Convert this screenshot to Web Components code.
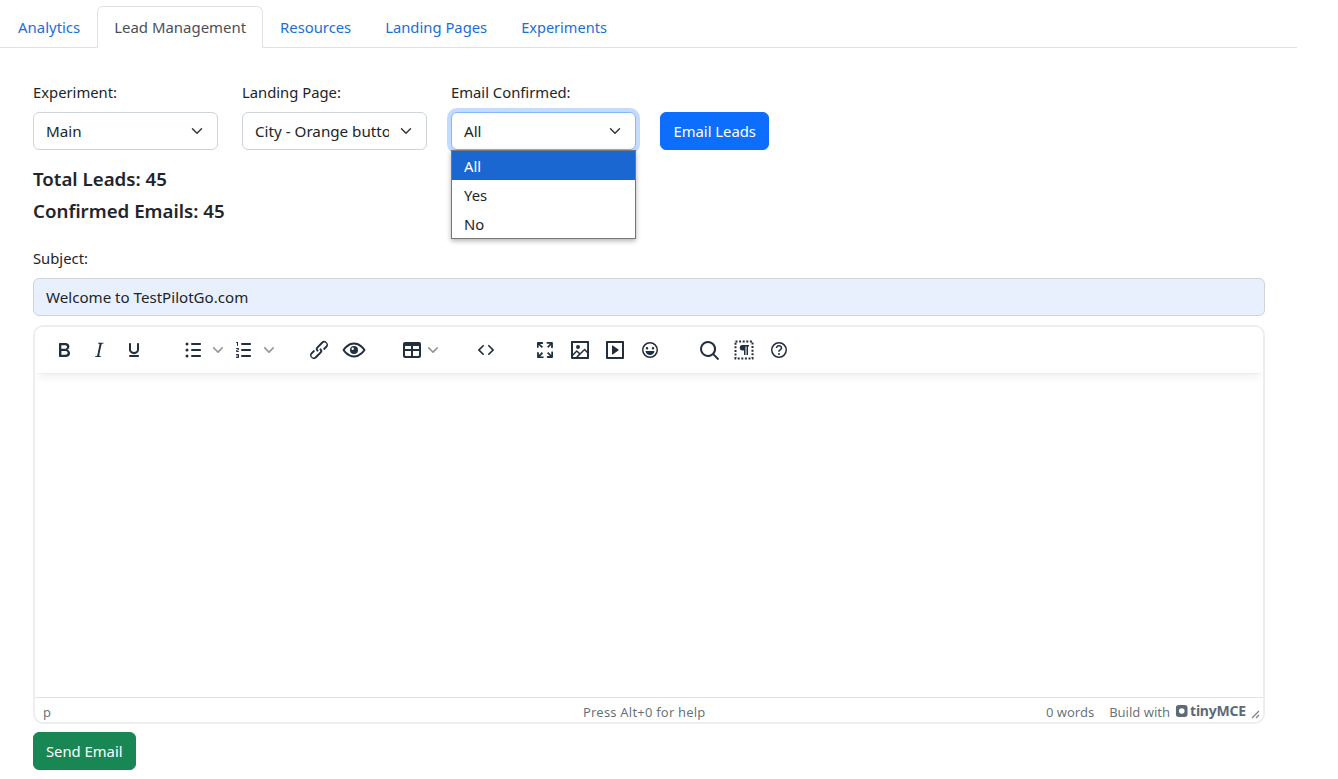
<!DOCTYPE html>
<html><head><meta charset="utf-8"><style>
html,body{margin:0;padding:0;background:#fff}
body{font-family:"Noto Sans","Open Sans",sans-serif;font-size:14.8px;color:#212529;overflow:hidden;height:779px}
</style></head><body>
<lead-page></lead-page>
<script>
const ICONS={
bold:'<path d="M7.8 19c-.3 0-.5 0-.6-.2l-.2-.5V5.700c0-.2 0-.4.2-.5l.6-.2h5c1.500 0 2.700.3 3.500 1 .7.6 1.100 1.400 1.100 2.500a3 3 0 0 1-.6 1.900c-.4.6-1 1-1.600 1.200.4.1.9.3 1.300.6s.8.7 1 1.200c.4.4.5 1 .5 1.600 0 1.300-.4 2.300-1.300 3-.8.7-2.100 1-3.800 1H7.800Zm5-8.300c.6 0 1.200-.1 1.600-.5.4-.3.6-.7.6-1.300 0-1.100-.8-1.700-2.400-1.700H9.300v3.500h3.400Zm.5 6c.7 0 1.300-.1 1.700-.4.4-.4.6-.9.6-1.500s-.2-1-.7-1.400c-.4-.3-1-.4-2-.4H9.400v3.800h4Z"/>',
italic:'<path d="m16.7 4.7-.1.9h-.3c-.6 0-1 0-1.400.3-.3.3-.4.6-.5 1.100l-2.100 9.800v.6c0 .5.4.8 1.400.8h.2l-.2.8H8l.2-.8h.2c1.100 0 1.800-.5 2-1.500l2-9.800.1-.5c0-.6-.4-.8-1.400-.8h-.3l.2-.9h5.800Z"/>',
underline:'<path d="M16 5c.6 0 1 .4 1 1v5.500a4 4 0 0 1-.4 1.800l-1 1.400a5.300 5.300 0 0 1-5.500 1 5 5 0 0 1-1.600-1c-.5-.4-.8-.9-1.100-1.400a4 4 0 0 1-.4-1.800V6c0-.6.4-1 1-1s1 .4 1 1v5.500c0 .3 0 .6.2 1l.6.7a3.300 3.300 0 0 0 2.200.8 3.400 3.400 0 0 0 2.200-.8c.3-.2.4-.5.6-.8l.2-.9V6c0-.6.4-1 1-1ZM8 17h8c.6 0 1 .4 1 1s-.4 1-1 1H8a1 1 0 0 1 0-2Z"/>',
ul:'<path d="M11 5h8c.6 0 1 .4 1 1s-.4 1-1 1h-8a1 1 0 0 1 0-2Zm0 6h8c.6 0 1 .4 1 1s-.4 1-1 1h-8a1 1 0 0 1 0-2Zm0 6h8c.6 0 1 .4 1 1s-.4 1-1 1h-8a1 1 0 0 1 0-2Z"/><circle cx="6" cy="6" r="1.500"/><circle cx="6" cy="12" r="1.500"/><circle cx="6" cy="18" r="1.500"/>',
ol:'<path d="M10 17h8c.6 0 1 .4 1 1s-.4 1-1 1h-8a1 1 0 0 1 0-2Zm0-6h8c.6 0 1 .4 1 1s-.4 1-1 1h-8a1 1 0 0 1 0-2Zm0-6h8c.6 0 1 .4 1 1s-.4 1-1 1h-8a1 1 0 1 1 0-2ZM6 4v3.500c0 .3-.2.5-.5.5a.5.5 0 0 1-.5-.5V5h-.5a.5.5 0 0 1 0-1H6Zm-1 8.800.2.2h1.300c.3 0 .5.2.5.5s-.2.5-.5.5H4.900a1 1 0 0 1-.9-1V13c0-.4.3-.8.6-1l1.200-.4.2-.3a.2.2 0 0 0-.2-.2H4.500a.5.5 0 0 1-.5-.5c0-.3.2-.5.5-.5h1.600c.5 0 .9.4.9 1v.1c0 .4-.3.8-.6 1l-1.200.4-.2.3ZM7 17v2c0 .6-.4 1-1 1H4.500a.5.5 0 0 1 0-1h1.200c.2 0 .3-.1.3-.3 0-.2-.1-.3-.3-.3H4.400a.4.4 0 1 1 0-.8h1.300c.2 0 .3-.1.3-.3 0-.2-.1-.3-.3-.3H4.500a.5.5 0 1 1 0-1H6c.6 0 1 .4 1 1Z"/>',
link:'<path d="M6.200 12.300a1 1 0 0 1 1.400 1.400l-2 2a2 2 0 1 0 2.600 2.800l4.800-4.800a1 1 0 0 0 0-1.400 1 1 0 1 1 1.400-1.300 2.900 2.900 0 0 1 0 4L9.600 20a3.900 3.900 0 0 1-5.500-5.500l2-2Zm11.600-.6a1 1 0 0 1-1.400-1.400l2-2a2 2 0 1 0-2.600-2.800L11 10.300a1 1 0 0 0 0 1.400A1 1 0 1 1 9.600 13a2.900 2.900 0 0 1 0-4L14.400 4a3.900 3.900 0 0 1 5.500 5.500l-2 2Z"/>',
eye:'<path fill="none" stroke="#222f3e" stroke-width="2" d="M1.600 12S5.500 5.600 12 5.600 22.400 12 22.400 12 18.500 18.400 12 18.400 1.600 12 1.600 12Z"/><circle cx="12" cy="12" r="4"/><circle cx="10.700" cy="10.700" r="1.200" fill="#fff"/>',
table:'<path fill-rule="evenodd" d="M19 4a2 2 0 0 1 2 2v12a2 2 0 0 1-2 2H5a2 2 0 0 1-2-2V6c0-1.100.9-2 2-2h14Zm-8 9H5v4.300c0 .4.3.7.7.7H11v-5Zm8 0h-6v5h5.300c.4 0 .7-.3.7-.7V13Zm-8-5H5v3h6V8Zm8 0h-6v3h6V8Z"/>',
code:'<path d="M9.800 15.700c.3.3.3.8 0 1-.3.4-.9.4-1.200 0l-4.400-4.100a.8.8 0 0 1 0-1.200l4.400-4.200c.3-.3.9-.3 1.200 0 .3.3.3.8 0 1.100L6 12l3.800 3.700ZM14.200 15.700c-.3.3-.3.8 0 1 .4.4.9.4 1.200 0l4.400-4.100c.3-.3.3-.9 0-1.200l-4.400-4.200a.8.8 0 0 0-1.200 0c-.3.3-.3.8 0 1.100L18 12l-3.800 3.700Z"/>',
full:'<path d="m15.300 10-1.200-1.300 2.900-3h-2.300a.9.9 0 1 1 0-1.700H19c.5 0 .9.4.9.9v4.400a.9.9 0 1 1-1.800 0V7l-2.900 3Zm0 4 3 3v-2.300a.9.9 0 1 1 1.700 0V19c0 .5-.4.9-.9.9h-4.400a.9.9 0 1 1 0-1.800H17l-3-2.900 1.300-1.200ZM10 15.400l-2.900 3h2.300a.9.9 0 1 1 0 1.700H5a.9.9 0 0 1-.9-.9v-4.400a.9.9 0 1 1 1.800 0V17l2.900-3 1.200 1.300ZM8.700 10 5.700 7v2.300a.9.9 0 0 1-1.700 0V5c0-.5.4-.9.9-.9h4.400a.9.9 0 0 1 0 1.800H7l3 2.900-1.300 1.200Z"/>',
image:'<path fill-rule="evenodd" d="M4 3h16c.6 0 1 .4 1 1v16c0 .6-.4 1-1 1H4a1 1 0 0 1-1-1V4c0-.6.4-1 1-1Zm1 12.700 3.300-3.200c.3-.3.7-.3 1 0L12 15l4.100-4c.3-.4.8-.4 1 0l2 1.900V5H5v10.700ZM5 18v1h3l2.800-2.900-2-2L5 18Zm14-3-2.500-2.400-6.400 6.400H19v-4Zm-9-4a2 2 0 1 0 0-4 2 2 0 0 0 0 4Z"/>',
embed:'<path fill-rule="evenodd" d="M4 3h16c.6 0 1 .4 1 1v16c0 .6-.4 1-1 1H4a1 1 0 0 1-1-1V4c0-.6.4-1 1-1Zm1 2v14h14V5H5Zm4.800 2.600 5.600 4a.5.5 0 0 1 0 .8l-5.600 4A.5.5 0 0 1 9 16V8a.5.5 0 0 1 .8-.4Z"/>',
emoji:'<path fill-rule="evenodd" d="M12 4a8 8 0 1 1 0 16 8 8 0 0 1 0-16Zm0 1.500a6.500 6.500 0 1 0 0 13 6.500 6.500 0 0 0 0-13ZM9 9a1.200 1.200 0 1 1 0 2.500A1.200 1.200 0 0 1 9 9Zm6 0a1.200 1.200 0 1 1 0 2.500A1.200 1.200 0 0 1 15 9Zm-7.500 4h9c-.3 2.400-2.200 4-4.500 4s-4.200-1.600-4.500-4Z"/>',
search:'<path fill-rule="evenodd" d="M16 17.300a8 8 0 1 1 1.400-1.400l4.300 4.400a1 1 0 0 1-1.400 1.400l-4.300-4.400ZM11 17a6 6 0 1 0 0-12 6 6 0 0 0 0 12Z"/>',
blocks:'<rect x="3.500" y="3.500" width="17" height="17" fill="none" stroke="#222f3e" stroke-width="2" stroke-dasharray="2 1.600"/><path d="M10.500 7H17v1.500h-1V17h-1.500V8.500h-1V17H12v-4.500h-1.500a2.750 2.750 0 0 1 0-5.500Z"/>',
help:'<path fill-rule="evenodd" d="M12 4a8 8 0 1 1 0 16 8 8 0 0 1 0-16Zm0 1.500a6.500 6.500 0 1 0 0 13 6.500 6.500 0 0 0 0-13ZM12 15a1 1 0 1 1 0 2 1 1 0 0 1 0-2Zm0-8c1.800 0 3.200 1.200 3.200 2.900 0 1.300-.8 2-1.600 2.500-.6.4-.9.7-.9 1.100v.2h-1.500v-.3c0-1 .6-1.600 1.500-2.200.6-.4 1-.7 1-1.300 0-.8-.7-1.400-1.700-1.400s-1.700.6-1.800 1.500H8.800C9 8.200 10.200 7 12 7Z"/>'
};
const CHEV='<svg width="10" height="10" viewBox="0 0 10 10" style="fill:#222f3e;opacity:.5"><path d="M8.700 2.200c.3-.3.8-.3 1 0 .4.4.4.9 0 1.200L5.700 7.800c-.3.3-.9.3-1.200 0L.2 3.400a.8.8 0 0 1 0-1.200c.3-.3.8-.3 1.100 0L5 6l3.700-3.800Z"/></svg>';
function def(name,css,html){
  customElements.define(name,class extends HTMLElement{
    connectedCallback(){ if(this.shadowRoot) return; const r=this.attachShadow({mode:'open'});
      r.innerHTML='<style>'+css+'</style>'+(typeof html==='function'?html(this):html); }
  });
}
def('nav-tab',`:host{display:block;margin-bottom:-1px;line-height:24px;font-size:14.8px}
a{display:block;padding:8px 16px;color:#1a6fd6;border:1px solid transparent;border-radius:6px 6px 0 0;text-decoration:none}
:host([active]) a{color:#495057;background:#fff;border-color:#dee2e6 #dee2e6 #fff}`,'<a href="#"><slot></slot></a>');
def('nav-tabs',`:host{display:flex;margin:6px 0 0 0;padding-left:1px;border-bottom:1px solid #dee2e6;box-sizing:border-box;width:1297px}`,'<slot></slot>');
def('filter-field',`:host{display:flex;flex-direction:column;width:185px;position:relative;line-height:24px}
label{display:block;margin-bottom:8px}
.sel{box-sizing:border-box;height:38px;border:1px solid #ced4da;border-radius:6px;background:#fff;padding:6px 37px 6px 12px;line-height:24px;position:relative;white-space:nowrap;font-size:15.2px}
.txt{display:block;overflow:hidden}
svg{position:absolute;right:12px;top:12px}
:host([focused]) .sel{border-color:#86b7fe;box-shadow:0 0 0 4px rgba(13,110,253,.25)}`,
h=>`<label>${h.getAttribute('label')}</label><div class="sel"><span class="txt">${h.getAttribute('value')}</span><svg width="16" height="12" viewBox="0 0 16 16"><path fill="none" stroke="#343a40" stroke-linecap="round" stroke-linejoin="round" stroke-width="2" d="m2 5 6 6 6-6"/></svg></div><slot></slot>`);
def('option-list',`:host{display:block;position:absolute;left:0;right:0;top:70px;z-index:5;background:#fff;border:1px solid #767676;box-shadow:0 2px 5px rgba(0,0,0,.3);box-sizing:border-box;height:89px}`,'<slot></slot>');
def('option-item',`:host{display:block;height:29px;line-height:30px;padding-left:12px}
:host([selected]){background:#1a67d2;color:#fff}`,'<slot></slot>');
def('action-btn',`:host{display:inline-block;box-sizing:border-box;height:38px;line-height:36px;padding:0 12.5px;border-radius:6px;color:#fff;background:#0d6efd;border:1px solid #0d6efd;white-space:nowrap}
:host([kind=success]){background:#198754;border-color:#198754;padding:0 12px}`,'<slot></slot>');
def('stat-line',`:host{display:block;font-size:18.7px;font-weight:600;line-height:24px;margin-bottom:8px;color:#212529}`,'<slot></slot>');
def('tb-btn',`:host{display:flex;align-items:center;justify-content:center;width:34px;height:34px;margin-right:1px;flex:none}
svg{width:24px;height:24px;fill:#222f3e;display:block}`,h=>`<svg viewBox="0 0 24 24">${ICONS[h.getAttribute('icon')]}</svg>`);
def('tb-split',`:host{display:flex;align-items:center;height:34px;flex:none;margin-right:1px}
.i{width:34px;height:34px;display:flex;align-items:center;justify-content:center}
.c{width:16px;display:flex;justify-content:center}
svg.m{width:24px;height:24px;fill:#222f3e}`,h=>`<div class="i"><svg class="m" viewBox="0 0 24 24">${ICONS[h.getAttribute('icon')]}</svg></div><div class="c">${CHEV}</div>`);
def('tb-menu',`:host{display:flex;align-items:center;height:34px;width:45px;margin:0 27px 0 1px;padding-left:3px;box-sizing:border-box;flex:none}
svg.m{width:24px;height:24px;fill:#222f3e;margin-right:4px}`,h=>`<svg class="m" viewBox="0 0 24 24">${ICONS[h.getAttribute('icon')]}</svg>${CHEV}`);
def('tb-group',`:host{display:flex;flex:none;margin-right:24px}`,'<slot></slot>');
def('mce-editor',`:host{display:flex;flex-direction:column;box-sizing:border-box;height:399px;border:2px solid #eeeeee;border-radius:10px;overflow:hidden;background:#fff}
.tb{display:flex;align-items:center;height:46px;padding-left:12px;box-sizing:border-box;background:#fff;box-shadow:0 2px 2px -2px rgba(34,47,62,.1),0 8px 8px -4px rgba(34,47,62,.07);position:relative;z-index:1;flex:none}
.body{flex:1}
.st{height:25px;flex:none;border-top:1px solid #e3e3e3;box-sizing:border-box;display:flex;align-items:center;font-size:13px;color:rgba(34,47,62,.7);padding:4px 3px 0 8px}
.st .p{width:540px}
.mid{flex:1;letter-spacing:.2px}.w{margin-right:15px}
.bw{margin-right:5px}
.logo{display:flex;align-items:center;gap:2px;font-weight:700;font-size:14px;margin-right:4px;color:#5e6a77;letter-spacing:-.2px;margin-top:-3px}
.logo svg{display:block}
.rz{display:block;margin-top:3px}`,
`<div class="tb"><slot name="toolbar"></slot></div><div class="body"></div>
<div class="st"><span class="p">p</span><span class="mid">Press Alt+0 for help</span><span class="w">0 words</span><span class="bw">Build with</span><span class="logo"><svg width="13" height="14" viewBox="0 0 14 14"><path fill="#5e6a77" fill-rule="evenodd" d="M4 .6h6.500A3 3 0 0 1 13.500 3.600v6.800a3 3 0 0 1-3 3H4a3 3 0 0 1-3-3V3.600a3 3 0 0 1 3-3Zm3.300 3.400a3 3 0 1 0 0 6 3 3 0 0 0 0-6Z"/></svg>tinyMCE</span><svg class="rz" width="10" height="10" viewBox="0 0 10 10"><path d="M9 2 2 9M9 6 6 9" stroke="#7a838d" stroke-width="1.200"/></svg></div>`);
def('lead-page',`:host{display:block;width:1297px}
.content{padding:32px 32px 0 33px;width:1232px}
.filters{display:flex;gap:24px;align-items:flex-end;margin-bottom:17px}
.sub{display:block;line-height:24px;margin:23px 0 8px}
.stats{display:block}
.inp{box-sizing:border-box;height:38px;line-height:36px;border:1px solid #ced4da;border-radius:6px;background:#e8f0fe;padding:0 12px;margin-bottom:9px;font-size:15.1px}
.send{margin-top:8px}
.f15{font-size:14.95px}.f146{font-size:14.55px}`,
`<nav-tabs><nav-tab class="f15">Analytics</nav-tab><nav-tab class="f15" active>Lead Management</nav-tab><nav-tab>Resources</nav-tab><nav-tab>Landing Pages</nav-tab><nav-tab class="f146">Experiments</nav-tab></nav-tabs>
<div class="content">
<div class="filters">
<filter-field label="Experiment:" value="Main"></filter-field>
<filter-field label="Landing Page:" value="City - Orange button"></filter-field>
<filter-field label="Email Confirmed:" value="All" focused><option-list><option-item selected>All</option-item><option-item>Yes</option-item><option-item>No</option-item></option-list></filter-field>
<action-btn>Email Leads</action-btn>
</div>
<div class="stats"><stat-line>Total Leads: 45</stat-line><stat-line>Confirmed Emails: 45</stat-line></div>
<label class="sub">Subject:</label>
<div class="inp">Welcome to TestPilotGo.com</div>
<mce-editor>
<tb-group slot="toolbar"><tb-btn icon="bold"></tb-btn><tb-btn icon="italic"></tb-btn><tb-btn icon="underline"></tb-btn></tb-group>
<tb-group slot="toolbar"><tb-split icon="ul"></tb-split><tb-split icon="ol"></tb-split></tb-group>
<tb-group slot="toolbar"><tb-btn icon="link"></tb-btn><tb-btn icon="eye"></tb-btn></tb-group>
<tb-menu slot="toolbar" icon="table"></tb-menu>
<tb-group slot="toolbar"><tb-btn icon="code"></tb-btn></tb-group>
<tb-group slot="toolbar"><tb-btn icon="full"></tb-btn><tb-btn icon="image"></tb-btn><tb-btn icon="embed"></tb-btn><tb-btn icon="emoji"></tb-btn></tb-group>
<tb-group slot="toolbar"><tb-btn icon="search"></tb-btn><tb-btn icon="blocks"></tb-btn><tb-btn icon="help"></tb-btn></tb-group>
</mce-editor>
<div class="send"><action-btn kind="success">Send Email</action-btn></div>
</div>`);
</script>
</body></html>
